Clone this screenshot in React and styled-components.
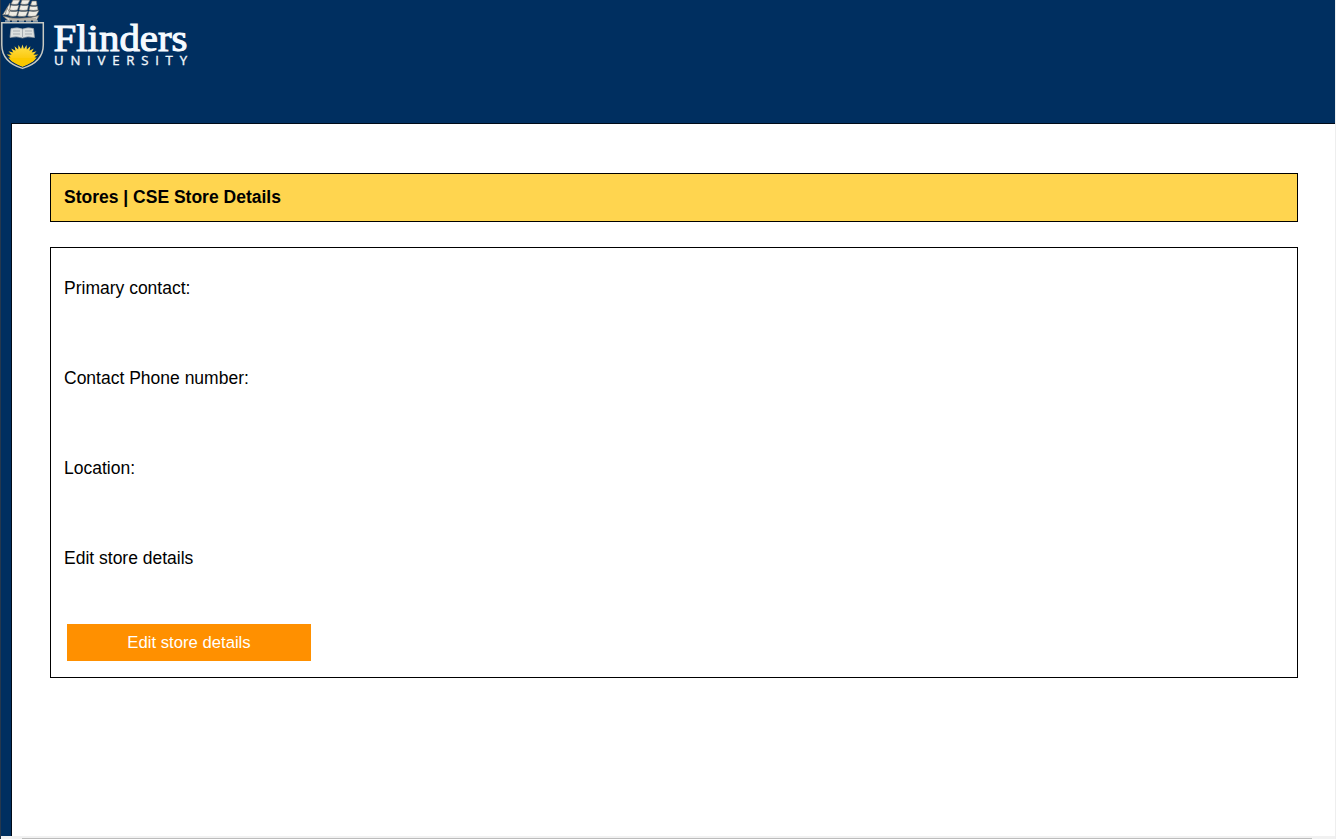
import React from "react";
import styled, { createGlobalStyle } from "styled-components";

const GlobalStyle = createGlobalStyle`
  *, *::before, *::after { box-sizing: border-box; }
  body { margin: 0; background: #002f60; overflow: hidden; }
`;

const Window = styled.div`
  display: flex;
  flex-direction: column;
  width: 1336px;
  height: 839px;
  border-left: 1px solid #26384d;
  border-right: 1px solid #eeeeee;
  background: #002f60;
  color: #000;
  font-family: "Liberation Sans", Arial, sans-serif;
  font-size: 17.5px;
`;

const Header = styled.header`
  flex: none;
  height: 123px;
`;

const Logo = styled.svg`
  display: block;
`;

const Page = styled.main`
  flex: 1;
  min-height: 0;
  margin-left: 10px;
  padding: 49px 37px 0 38px;
  border-top: 1px solid #000b18;
  border-left: 1px solid #000b18;
  background: #fff;
`;

const TitleBar = styled.h1`
  height: 49px;
  margin: 0 0 25px;
  padding: 13px 13px 0;
  border: 1px solid #000;
  background: #ffd54f;
  font-size: 17.5px;
  font-weight: bold;
  line-height: 21px;
`;

const Panel = styled.section`
  height: 431px;
  padding: 30px 13px 0;
  border: 1px solid #000;
`;

const Field = styled.p`
  height: 90px;
  margin: 0;
  line-height: 21px;
`;

const Button = styled.button`
  display: block;
  width: 244px;
  height: 37px;
  margin: -14px 0 0 3px;
  padding: 0;
  border: 0;
  background: #ff9000;
  color: #fff;
  font: 16.7px "Liberation Sans", Arial, sans-serif;
`;

const ScrollTrack = styled.div`
  flex: none;
  height: 3px;
  padding: 2px 23px 0 21px;
  background: #f1f1f1;
`;

const ScrollThumb = styled.div`
  height: 1px;
  background: #bcbcbc;
`;

const rays = Array.from({ length: 29 }, (_, i) => {
  const angle = Math.PI * 0.96 + (i * Math.PI * 1.08) / 28;
  const radius = i % 2 === 0 ? 1 : 0.72;
  return `${22.5 + Math.cos(angle) * radius * 17},${60 + Math.sin(angle) * radius * 15.5}`;
}).join(" ");

function FlindersLogo() {
  return (
    <Logo width="200" height="76" viewBox="1 0 200 76" role="img" aria-label="Flinders University">
      <defs>
        <clipPath id="shield">
          <path d="M4 24H41V45Q41 60 22.5 67Q4 60 4 45Z" />
        </clipPath>
        <linearGradient id="sun" x1="0" y1="0" x2="0" y2="1">
          <stop offset="0" stopColor="#ffe04a" />
          <stop offset="1" stopColor="#fbc400" />
        </linearGradient>
      </defs>
      <g fill="#eeece4" stroke="#6b6860" strokeWidth=".6" strokeLinejoin="round">
        <path d="M10 3L2.5 15L10 14Z" />
        <path d="M7 8L5 15L11 14.5Z" />
        <path d="M13 0H20L18 4Q15 5 11 4Z" />
        <path d="M11 5Q15 6 19 5L17.5 10Q13 11 9.5 10Z" />
        <path d="M9.5 11Q14 12 18 11L16.5 16Q12 17 8.5 15.5Z" />
        <path d="M22 0H30L28 4Q24 5 20.5 4Z" />
        <path d="M20.5 5Q25 6 28.5 5L27.5 10Q23 11 19 10Z" />
        <path d="M19 11Q23 12 28 11L26 16Q22 17 17.5 16Z" />
        <path d="M32 1H36.5L37 5Q34 6 30.5 5Z" />
        <path d="M30 6Q34 7 37.5 6L38 10Q33 11 29 10Z" />
        <path d="M29 11Q34 12 39 10.5L36 16Q31 17 27.5 16Z" />
      </g>
      <path d="M3 16Q12 19 22 18Q31 18 39 15.5L36.5 20.5H8Z" fill="#d7d3c8" stroke="#68645c" strokeWidth=".7" />
      <path d="M9 19H36" stroke="#77736a" strokeWidth=".7" />
      <path d="M5 21H39" stroke="#e8e9e5" strokeWidth="1.2" strokeDasharray="5 2" />
      <path d="M1.8 22.8H43.3V45Q43.3 62 22.5 68.4Q1.8 62 1.8 45Z" fill="#002c5b" stroke="#c8cac3" strokeWidth="1.5" />
      <g clipPath="url(#shield)">
        <polygon points={rays} fill="url(#sun)" />
        <path d="M9 58H36L34 62L22.5 67L11 62Z" fill="#fbc800" />
      </g>
      <path d="M11 28.5Q18 27 22.5 29Q28 27 33.5 28.5L34.5 37.5Q27 36 22.5 38Q17 36 10 37.5Z" fill="#dce0df" stroke="#99a2a9" strokeWidth=".7" />
      <path d="M22.5 29V37M13 31H20M13 34H20M25 31H32M25 34H32" fill="none" stroke="#9099a0" strokeWidth=".7" />
      <text x="53.5" y="50.5" fill="#f5faff" stroke="#f5faff" strokeWidth="1.1" fontFamily='"Liberation Serif", serif' fontSize="38.5" textLength="134" lengthAdjust="spacingAndGlyphs">Flinders</text>
      <text x="54" y="64.8" fill="#f0f6fb" stroke="#f0f6fb" strokeWidth=".35" fontFamily='"Open Sans", sans-serif' fontSize="13.2" textLength="133" lengthAdjust="spacing">UNIVERSITY</text>
    </Logo>
  );
}

export default function App() {
  return (
    <>
      <GlobalStyle />
      <Window>
        <Header><FlindersLogo /></Header>
        <Page>
          <TitleBar>Stores | CSE Store Details</TitleBar>
          <Panel>
            <Field>Primary contact:</Field>
            <Field>Contact Phone number:</Field>
            <Field>Location:</Field>
            <Field>Edit store details</Field>
            <Button>Edit store details</Button>
          </Panel>
        </Page>
        <ScrollTrack><ScrollThumb /></ScrollTrack>
      </Window>
    </>
  );
}
